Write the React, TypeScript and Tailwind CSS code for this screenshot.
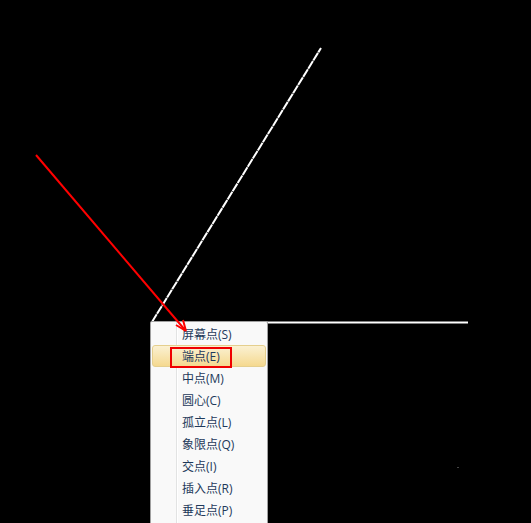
const items = ["屏幕点(S)", "端点(E)", "中点(M)", "圆心(C)", "孤立点(L)", "象限点(Q)", "交点(I)", "插入点(R)", "垂足点(P)"];

export default function App() {
  return (
    <div className="relative w-[531px] h-[523px] bg-black overflow-hidden font-['Open_Sans','Noto_Sans_CJK_SC',sans-serif] text-[12px]">
      <svg className="absolute inset-0" width="531" height="523" viewBox="0 0 531 523">
        <line x1="152" y1="322" x2="321" y2="48" stroke="#fff" strokeWidth="2" strokeDasharray="9 0.6" />
        <line x1="152" y1="322.5" x2="468" y2="322.5" stroke="#fff" strokeWidth="2" />
        <rect x="457" y="467" width="2" height="1" fill="#444" />
      </svg>
      <div className="absolute left-[150px] top-[321px] w-[118px] h-[202px] bg-[#f9f9f9] border border-[#a0a0a0] border-b-0 rounded-t-[2px] pt-[1px] px-[1px] overflow-hidden">
        <div className="absolute left-[25px] top-0 bottom-0 w-[1px] bg-[#e2e3e3] border-r border-white box-content" />
        {items.map((t, i) => (
          <div
            key={t}
            className={
              i === 1
                ? "relative h-[22px] flex items-center text-[#1e395b] leading-none rounded-[3px] border border-[#e5cf8e] bg-gradient-to-b from-[#fbf1d2] to-[#f5d98f]"
                : "relative h-[22px] flex items-center text-[#1e395b] leading-none"
            }
          >
            <span className={i === 1 ? "w-[29px] shrink-0" : "w-[30px] shrink-0"} />
            <span className="pt-[2px] whitespace-nowrap">{t}</span>
          </div>
        ))}
      </div>
      <div className="absolute left-[170px] top-[347px] w-[62px] h-[21px] border-2 border-[#f00000]" />
      <svg className="absolute inset-0 pointer-events-none" width="531" height="523" viewBox="0 0 531 523">
        <line x1="36" y1="155" x2="185" y2="330" stroke="#f00" strokeWidth="2" />
        <path d="M186 331 L176 325 M186 331 L183 320" stroke="#f00" strokeWidth="2" fill="none" />
      </svg>
    </div>
  );
}
